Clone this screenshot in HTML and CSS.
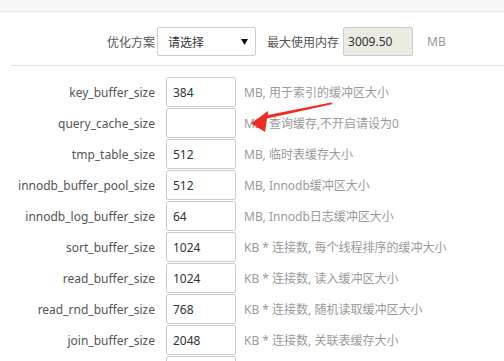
FILE: index.html
```html
<!DOCTYPE html>
<html lang="zh">
<head>
<meta charset="utf-8">
<link rel="stylesheet" href="styles.css">
</head>
<body>
<div class="topbar"></div>
<div class="form">
  <div class="header">
    <span class="hlabel">优化方案</span>
    <div class="select">
      <span class="select-text">请选择</span>
      <svg class="caret" width="7" height="6" viewBox="0 0 7 6"><path d="M0 0H7L3.5 6Z" fill="#111"/></svg>
    </div>
    <span class="hlabel2">最大使用内存</span>
    <input class="field readonly" value="3009.50" readonly>
    <span class="unit">MB</span>
  </div>
  <div class="rows">
    <div class="row"><label class="label">key_buffer_size</label><input class="field" value="384"><span class="desc">MB, 用于索引的缓冲区大小</span></div>
    <div class="row"><label class="label">query_cache_size</label><input class="field" value=""><span class="desc">MB, 查询缓存,不开启请设为0</span></div>
    <div class="row"><label class="label">tmp_table_size</label><input class="field" value="512"><span class="desc">MB, 临时表缓存大小</span></div>
    <div class="row"><label class="label">innodb_buffer_pool_size</label><input class="field" value="512"><span class="desc">MB, Innodb缓冲区大小</span></div>
    <div class="row"><label class="label">innodb_log_buffer_size</label><input class="field" value="64"><span class="desc">MB, Innodb日志缓冲区大小</span></div>
    <div class="row"><label class="label">sort_buffer_size</label><input class="field" value="1024"><span class="desc">KB * 连接数, 每个线程排序的缓冲大小</span></div>
    <div class="row"><label class="label">read_buffer_size</label><input class="field" value="1024"><span class="desc">KB * 连接数, 读入缓冲区大小</span></div>
    <div class="row"><label class="label">read_rnd_buffer_size</label><input class="field" value="768"><span class="desc">KB * 连接数, 随机读取缓冲区大小</span></div>
    <div class="row"><label class="label">join_buffer_size</label><input class="field" value="2048"><span class="desc">KB * 连接数, 关联表缓存大小</span></div>
    <div class="row"><span class="label"></span><input class="field" value=""></div>
  </div>
</div>
<svg class="pointer" width="504" height="361" viewBox="0 0 504 361">
  <path d="M331 102.5 L333 104 L267 118.5 L265 132 L251 123.5 L268 111 L268 115 Z" fill="#ee2d24"/>
</svg>
</body>
</html>
```
FILE: styles.css
```css
html, body {
  margin: 0;
  padding: 0;
  background: #fff;
  overflow: hidden;
  height: 361px;
}
body {
  position: relative;
  font-family: "Noto Sans", "Noto Sans CJK SC", sans-serif;
  font-size: 12px;
  color: #555;
}
.topbar {
  height: 11px;
  background: #f7f7f7;
  border-bottom: 1px solid #e8e8e8;
}
.form {
  margin-left: 11px;
}
.header {
  display: flex;
  align-items: center;
  padding: 15px 0 9px;
  border-bottom: 1px solid #ddd;
}
.hlabel {
  width: 144px;
  text-align: right;
  color: #555;
}
.select {
  box-sizing: border-box;
  margin-left: 2px;
  width: 99px;
  height: 29px;
  border: 1px solid #ccc;
  border-radius: 2px;
  display: flex;
  align-items: center;
  justify-content: space-between;
  padding: 0 7px 0 10px;
  color: #333;
}
.hlabel2 {
  margin-left: 11px;
  margin-right: 4px;
  color: #555;
}
.rows {
  padding-top: 11px;
  display: flex;
  flex-direction: column;
  gap: 1px;
}
.row {
  display: flex;
  align-items: center;
  height: 30px;
}
.label {
  width: 144px;
  text-align: right;
  color: #555;
  white-space: nowrap;
}
.field {
  box-sizing: border-box;
  width: 70px;
  height: 30px;
  margin: 0 0 0 11px;
  padding: 0 6px;
  border: 1px solid #ccc;
  border-radius: 2px;
  font-family: "Noto Sans", "Noto Sans CJK SC", sans-serif;
  font-size: 12px;
  color: #333;
  background: #fff;
  outline: none;
}
.header .field {
  margin-left: 0;
  height: 29px;
  padding-left: 4px;
}
.field.readonly {
  background: #ebebe4;
}
.unit {
  margin-left: 14px;
  color: #999;
}
.desc {
  margin-left: 8px;
  color: #9a9a9a;
  white-space: nowrap;
}
.pointer {
  position: absolute;
  left: 0;
  top: 0;
  pointer-events: none;
}
```
